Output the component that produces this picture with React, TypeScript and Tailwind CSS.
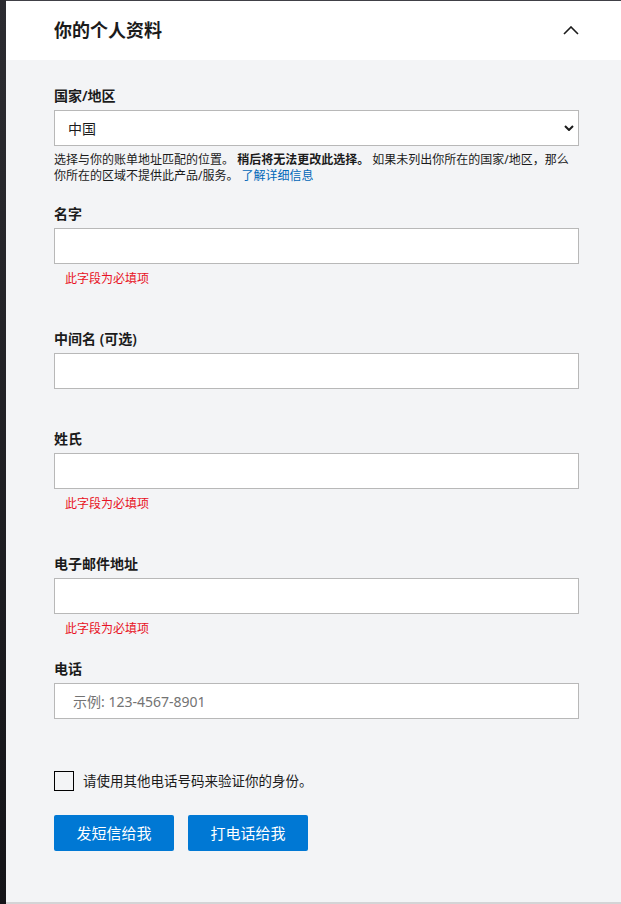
import React from 'react';

const font = { fontFamily: '"Noto Sans", "Noto Sans CJK SC", sans-serif' };

function Label({ children, className = '' }: { children: React.ReactNode; className?: string }) {
  return (
    <div className={`text-[14px] leading-[18px] font-semibold text-[#1b1b1b] mb-[5px] ${className}`}>
      {children}
    </div>
  );
}

function TextInput({ placeholder }: { placeholder?: string }) {
  return (
    <input
      type="text"
      placeholder={placeholder}
      className="block w-full h-[36px] bg-white border border-[#b8b8b8] pl-[18px] text-[14px] text-[#1b1b1b] placeholder:text-[#737373] outline-none"
    />
  );
}

function FieldError({ className = '' }: { className?: string }) {
  return (
    <div className={`mt-[7px] pl-[11px] text-[12px] leading-[16px] text-[#e81123] ${className}`}>
      此字段为必填项
    </div>
  );
}

export default function App() {
  return (
    <div className="flex w-full h-[904px] overflow-hidden" style={font}>
      <div className="w-[6px] shrink-0 bg-gradient-to-b from-[#2c2c31] to-[#141418]" />
      <div className="flex-1 flex flex-col border-t border-[#404046]">
        <div className="h-[59px] shrink-0 bg-white flex items-center justify-between pl-[48px] pr-[42px]">
          <h2 className="text-[18px] font-bold text-[#1b1b1b]">你的个人资料</h2>
          <svg width="16" height="9" viewBox="0 0 16 9" fill="none" className="mt-[-1px]">
            <path d="M1 8 L8 1 L15 8" stroke="#1b1b1b" strokeWidth="1.6" />
          </svg>
        </div>

        <div className="flex-1 bg-[#f3f4f6] pl-[48px] pr-[42px] pt-[27px] border-b-2 border-[#d4d4d6]">
          <Label>国家/地区</Label>
          <div className="relative">
            <select
              defaultValue="cn"
              className="block w-full h-[36px] bg-white border border-[#b8b8b8] pl-[13px] text-[14px] text-[#1b1b1b] appearance-none outline-none"
            >
              <option value="cn">中国</option>
            </select>
            <svg
              width="10"
              height="6"
              viewBox="0 0 10 6"
              fill="none"
              className="absolute right-[5px] top-[15px] pointer-events-none"
            >
              <path d="M1 1 L5 5 L9 1" stroke="#1b1b1b" strokeWidth="2" />
            </svg>
          </div>
          <p className="mt-[6px] text-[12px] leading-[16px] text-[#1b1b1b]">
            选择与你的账单地址匹配的位置。 <b className="font-bold">稍后将无法更改此选择。</b>{' '}
            如果未列出你所在的国家/地区，那么
            <br />
            你所在的区域不提供此产品/服务。{' '}
            <a href="#" className="text-[#0067b8]">
              了解详细信息
            </a>
          </p>

          <Label className="mt-[21px]">名字</Label>
          <TextInput />
          <FieldError />

          <Label className="mt-[43px]">中间名 (可选)</Label>
          <TextInput />

          <Label className="mt-[41px]">姓氏</Label>
          <TextInput />
          <FieldError />

          <Label className="mt-[43px]">电子邮件地址</Label>
          <TextInput />
          <FieldError />

          <Label className="mt-[23px]">电话</Label>
          <TextInput placeholder="示例: 123-4567-8901" />

          <label className="mt-[52px] flex items-center gap-[9px]">
            <span className="w-[20px] h-[20px] border border-black bg-transparent shrink-0" />
            <span className="text-[13.5px] leading-[20px] text-[#1b1b1b]">请使用其他电话号码来验证你的身份。</span>
          </label>

          <div className="mt-[24px] flex gap-[14px]">
            <button className="w-[120px] h-[36px] rounded-[2px] bg-[#0078d4] text-white text-[15px]">发短信给我</button>
            <button className="w-[120px] h-[36px] rounded-[2px] bg-[#0078d4] text-white text-[15px]">打电话给我</button>
          </div>
        </div>
      </div>
    </div>
  );
}
